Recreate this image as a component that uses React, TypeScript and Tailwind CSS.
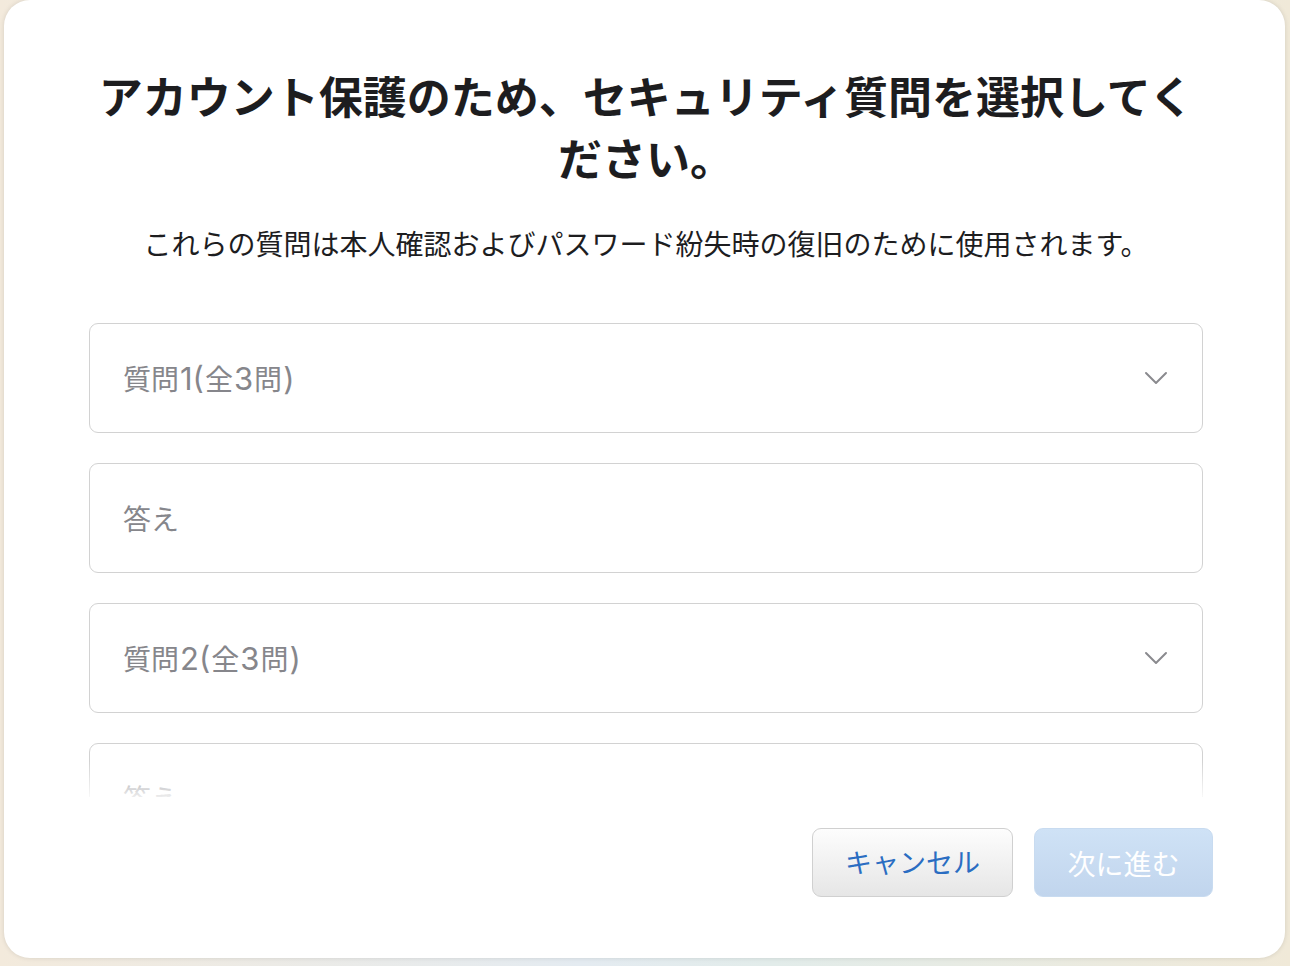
const font = { fontFamily: '"Noto Sans CJK JP", "Noto Sans", sans-serif' }
const latinFont = { fontFamily: 'Inter, "Noto Sans", sans-serif' }

function Chevron() {
  return (
    <svg width="24" height="14" viewBox="0 0 24 14" fill="none" className="text-[#8a8a8e]">
      <polyline points="2,2 12,12 22,2" stroke="currentColor" strokeWidth="2" strokeLinecap="round" strokeLinejoin="round" />
    </svg>
  )
}

// latin digits and brackets look a bit bigger than the kana in the original
function Label({ text }: { text: string }) {
  return (
    <span className="text-[28px] text-[#86868b]">
      {text.split(/([0-9()]+)/).map((part, i) =>
        /^[0-9()]+$/.test(part) ? (
          <span key={i} style={latinFont} className="px-[1px] text-[31px] leading-none">
            {part}
          </span>
        ) : (
          <span key={i}>{part}</span>
        )
      )}
    </span>
  )
}

function SelectField({ label }: { label: string }) {
  return (
    <div className="flex h-[110px] items-center justify-between rounded-[9px] border-[1.5px] border-[#d2d2d2] bg-white pl-[33px] pr-[34px]">
      <Label text={label} />
      <Chevron />
    </div>
  )
}

function AnswerField() {
  return (
    <div className="flex h-[110px] items-center rounded-[9px] border-[1.5px] border-[#d2d2d2] bg-white pl-[33px]">
      <span className="text-[28px] text-[#86868b]">答え</span>
    </div>
  )
}

export default function App() {
  return (
    <div
      style={font}
      className="h-[966px] w-full overflow-hidden bg-[linear-gradient(90deg,#f3eadc_0%,#e4ebf1_45%,#e2ecea_60%,#f0e9d8_100%)] pl-[4px]"
    >
      <div className="flex h-[958px] w-[1281px] flex-col rounded-[26px] bg-white shadow-[0_0_5px_rgba(0,0,0,0.12)]">
        <div className="relative min-h-0 flex-1 overflow-hidden pl-[85px] pr-[82px] pt-[64px]">
          <h1 className="text-center text-[44px] font-bold leading-[62px] text-[#1d1d1f]">
            アカウント保護のため、セキュリティ質問を選択してください。
          </h1>
          <p className="mt-[35px] text-center text-[28px] leading-[40px] text-[#1d1d1f]">
            これらの質問は本人確認およびパスワード紛失時の復旧のために使用されます。
          </p>
          <div className="mt-[60px] flex flex-col gap-[30px]">
            <SelectField label="質問1(全3問)" />
            <AnswerField />
            <SelectField label="質問2(全3問)" />
            <AnswerField />
          </div>
          <div className="pointer-events-none absolute bottom-0 left-0 right-0 h-[36px] bg-gradient-to-b from-white/0 to-white/85" />
        </div>
        <div className="flex justify-end gap-[21px] pb-[61px] pr-[72px] pt-[31px]">
          <button className="h-[69px] w-[201px] rounded-[9px] border-[1.5px] border-[#d0d0d0] bg-gradient-to-b from-[#fdfdfd] to-[#e6e6e6] text-[27px] text-[#2a6dc2]">
            キャンセル
          </button>
          <button className="h-[69px] w-[179px] rounded-[9px] border border-[#c8dbf0] bg-gradient-to-b from-[#cfe2f6] to-[#c1d5ed] text-[28px] text-white">
            次に進む
          </button>
        </div>
      </div>
    </div>
  )
}
